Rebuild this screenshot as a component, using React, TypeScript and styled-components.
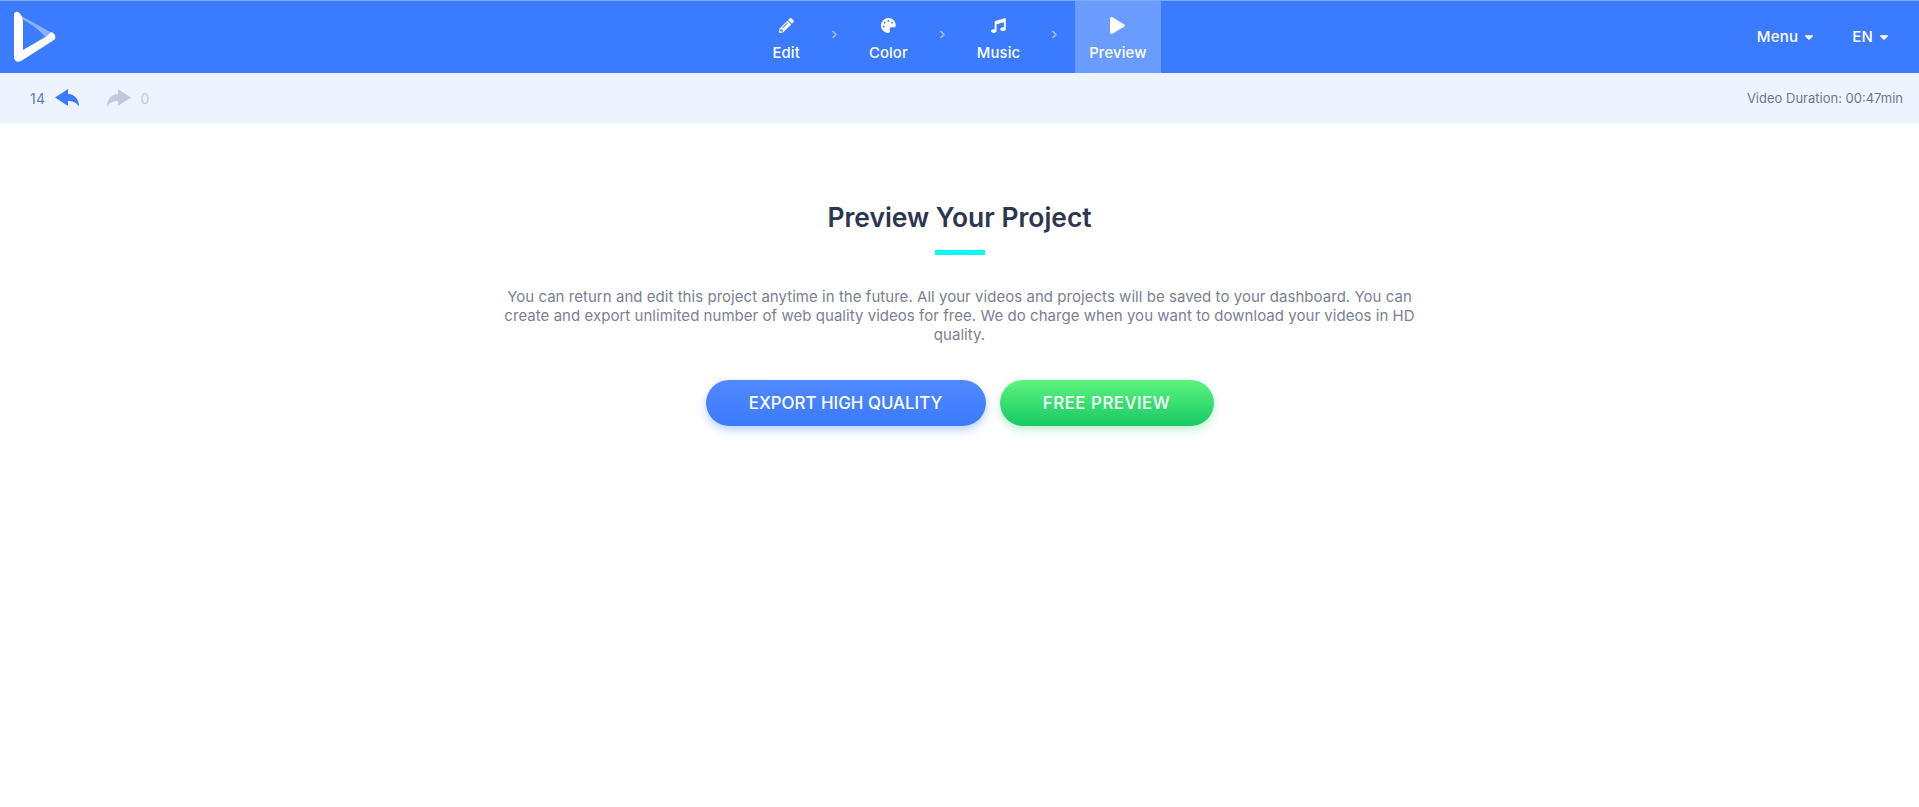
import React from 'react';
import styled, { createGlobalStyle } from 'styled-components';
import { FaCaretDown, FaChevronRight, FaMusic, FaPalette, FaPencilAlt, FaPlay } from 'react-icons/fa';

const GlobalStyle = createGlobalStyle`
  html, body {
    margin: 0;
    padding: 0;
    background: #fff;
    font-family: Inter, "Open Sans", sans-serif;
  }
`

const Header = styled.header`
  display: grid;
  grid-template-columns: 1fr auto 1fr;
  align-items: stretch;
  height: 72px;
  background-color: #3b7bff;
  border-top: 1px solid #7fa8ff;
`

const LogoWrap = styled.div`
  display: flex;
  align-items: center;
  padding: 0 0 0 13px;
`

const Nav = styled.nav`
  display: flex;
  align-items: stretch;
`

const Step = styled.div<{ active?: boolean }>`
  display: flex;
  flex-direction: column;
  align-items: center;
  justify-content: flex-start;
  padding: 15px 14px 0;
  color: #fff;
  font-size: 14.8px;
  letter-spacing: 0.15px;
  font-weight: 500;
  background-color: ${(props) => (props.active ? '#6a9bff' : 'transparent')};

  svg {
    height: 19px;
    margin-bottom: 9px;
  }
`

const Arrow = styled.div`
  display: flex;
  align-items: center;
  justify-content: center;
  width: 41px;
  padding-bottom: 5px;
  color: #a9c6ff;
  font-size: 9px;
`

const Actions = styled.div`
  display: flex;
  justify-content: flex-end;
  align-items: center;
  gap: 36px;
  padding: 0 28px 1px 0;
`

const ActionLink = styled.div`
  display: flex;
  align-items: center;
  gap: 4px;
  color: #fff;
  font-size: 15px;
  letter-spacing: 0.2px;
  font-weight: 500;
  svg {
    font-size: 14px;
  }
`

const SubBar = styled.div`
  display: flex;
  align-items: center;
  justify-content: space-between;
  height: 50px;
  padding: 0 16px 0 30px;
  background-color: #eef4ff;
`

const History = styled.div`
  display: flex;
  align-items: center;
`

const Count = styled.span<{ off?: boolean }>`
  font-size: 14px;
  letter-spacing: 0.4px;
  color: ${(props) => (props.off ? '#c3c9da' : '#5b7cc0')};
`

const HistoryIcon = styled.svg<{ off?: boolean }>`
  width: 24px;
  height: 18px;
  margin: ${(props) => (props.off ? '0 10px 0 28px' : '0 0 0 9px')};
  fill: ${(props) => (props.off ? '#c3c9da' : '#3b7bff')};
`

const Duration = styled.div`
  font-size: 13px;
  color: #71758a;
`

const Main = styled.main`
  display: flex;
  flex-direction: column;
  align-items: center;
  padding-top: 76px;
  height: 608px;
  box-sizing: border-box;
`

const Title = styled.h1`
  margin: 0;
  font-size: 26.4px;
  line-height: 36px;
  font-weight: 600;
  color: #2d364f;
`

const Accent = styled.div`
  width: 50px;
  height: 5px;
  margin: 15px 0 32px;
  background-color: #10f5f5;
`

const Description = styled.p`
  width: 925px;
  margin: 0 0 36px;
  font-size: 15px;
  letter-spacing: 0.04px;
  line-height: 19px;
  text-align: center;
  color: #7b7f92;
`

const Buttons = styled.div`
  display: flex;
  gap: 14px;
`

const Button = styled.button<{ green?: boolean }>`
  height: 46px;
  width: ${(props) => (props.green ? '214px' : '280px')};
  padding: 0;
  border: none;
  border-radius: 23px;
  color: #fff;
  font-family: inherit;
  font-size: 16.9px;
  letter-spacing: ${(props) => (props.green ? '0.5px' : '0')};
  font-weight: 500;
  background: ${(props) => (props.green
    ? 'linear-gradient(180deg, #5cf47e 0%, #17c964 100%)'
    : 'linear-gradient(180deg, #5088ff 0%, #3b7bff 100%)')};
  box-shadow: 0 4px 10px ${(props) => (props.green ? 'rgba(40, 210, 110, 0.3)' : 'rgba(59, 123, 255, 0.35)')};
`

const Logo = () => (
  <svg width="44" height="52" viewBox="0 0 44 52">
    <path d="M3 2 L41 23 L33 27 C28 20 18 13 9 8 C8 5 6 3 3 2 Z" fill="#fff" fillOpacity="0.4" />
    <path
      d="M1 4 C1 1 3 0 5 1 C8 3 10 6 10 11 L10 39 L34 25 C36 23 37 22 38 21 L40 22 C43 24 43 28 41 29 L8 50 C4 52 1 50 1 46 Z"
      fill="#fff"
    />
  </svg>
);

const steps = [
  { label: 'Edit', icon: <FaPencilAlt /> },
  { label: 'Color', icon: <FaPalette /> },
  { label: 'Music', icon: <FaMusic /> },
  { label: 'Preview', icon: <FaPlay /> },
];

const replyPath = 'M0 8.5 L13 0 L13 5 C20 5.5 24 10 24 17.5 C21 13 17 12 13 12 L13 17 Z';

const App: React.FC = () => (
  <>
    <GlobalStyle />
    <Header>
      <LogoWrap>
        <Logo />
      </LogoWrap>
      <Nav>
        {steps.map((step, i) => (
          <React.Fragment key={step.label}>
            <Step active={step.label === 'Preview'}>
              {step.icon}
              {step.label}
            </Step>
            {i < steps.length - 1 && (
              <Arrow>
                <FaChevronRight />
              </Arrow>
            )}
          </React.Fragment>
        ))}
      </Nav>
      <Actions>
        <ActionLink>Menu <FaCaretDown /></ActionLink>
        <ActionLink>EN <FaCaretDown /></ActionLink>
      </Actions>
    </Header>
    <SubBar>
      <History>
        <Count>14</Count>
        <HistoryIcon viewBox="0 0 24 18"><path d={replyPath} /></HistoryIcon>
        <HistoryIcon off viewBox="0 0 24 18"><path d={replyPath} transform="matrix(-1 0 0 1 24 0)" /></HistoryIcon>
        <Count off>0</Count>
      </History>
      <Duration>Video Duration: 00:47min</Duration>
    </SubBar>
    <Main>
      <Title>Preview Your Project</Title>
      <Accent />
      <Description>
        You can return and edit this project anytime in the future. All your videos and projects will be saved to your dashboard. You can create and export unlimited number of web quality videos for free. We do charge when you want to download your videos in HD quality.
      </Description>
      <Buttons>
        <Button>EXPORT HIGH QUALITY</Button>
        <Button green>FREE PREVIEW</Button>
      </Buttons>
    </Main>
  </>
);

export default App;
